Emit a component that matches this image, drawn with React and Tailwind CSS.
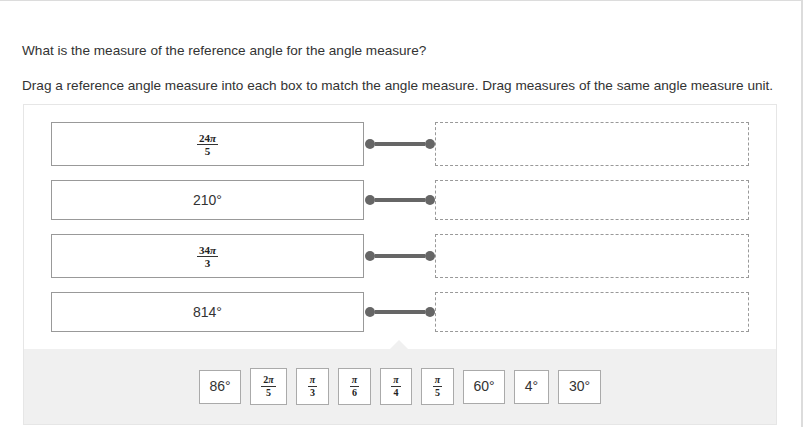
import React from "react";

const Num = ({ s }) => {
  const parts = s.split("π");
  return (
    <>
      {parts[0]}
      {s.includes("π") && <span className="italic">π</span>}
      {parts[1]}
    </>
  );
};

const Frac = ({ n, d, big }) => (
  <span
    className={
      "inline-flex flex-col items-center font-['Liberation_Serif','Times_New_Roman',serif] font-bold text-[#222] " +
      (big ? "text-[11px]" : "text-[10px]")
    }
  >
    <span className="px-[2px] leading-[10px]">
      <Num s={n} />
    </span>
    <span className="self-stretch h-0 border-t border-[#333] my-px"></span>
    <span className="leading-[10px]">{d}</span>
  </span>
);

const rows = [
  { frac: ["24π", "5"], h: "h-[44px]" },
  { text: "210°", h: "h-[40px]" },
  { frac: ["34π", "3"], h: "h-[44px]" },
  { text: "814°", h: "h-[40px]" },
];

const tiles = [
  { text: "86°", w: "w-[42px]" },
  { frac: ["2π", "5"], w: "w-[37px]" },
  { frac: ["π", "3"], w: "w-[33px]" },
  { frac: ["π", "6"], w: "w-[33px]" },
  { frac: ["π", "4"], w: "w-[32px]" },
  { frac: ["π", "5"], w: "w-[33px]" },
  { text: "60°", w: "w-[42px]" },
  { text: "4°", w: "w-[35px]" },
  { text: "30°", w: "w-[43px]" },
];

export default function App() {
  return (
    <div className="w-[805px] h-[427px] bg-white overflow-hidden font-['Liberation_Sans',Arial,sans-serif]">
      <div className="w-[803px] h-[427px] border-t border-r-2 border-[#dcdcdc] pl-[22px] pt-[42px]">
        <p className="text-[13.6px] leading-[16px] text-[#333]">
          What is the measure of the reference angle for the angle measure?
        </p>
        <p className="mt-[19px] text-[13.6px] leading-[16px] text-[#333]">
          Drag a reference angle measure into each box to match the angle measure. Drag measures of the same angle measure unit.
        </p>
        <div className="mt-[10px] ml-px w-[754px] border border-[#e6e6e6] flex flex-col">
          <div className="pt-[17px] px-[27px] flex flex-col gap-[14px]">
            {rows.map((r, i) => (
              <div key={i} className={"flex items-center " + r.h}>
                <div className="w-[313px] h-full border border-[#999] bg-white flex items-center justify-center text-[14px] text-[#333]">
                  {r.frac ? <Frac n={r.frac[0]} d={r.frac[1]} big /> : r.text}
                </div>
                <div className="w-[71px] flex items-center pl-px">
                  <span className="w-[10px] h-[10px] rounded-full bg-[#666] shrink-0"></span>
                  <span className="flex-1 h-[4px] bg-[#666]"></span>
                  <span className="w-[10px] h-[10px] rounded-full bg-[#666] shrink-0"></span>
                </div>
                <div className="w-[314px] h-full border border-dashed border-[#999] bg-white"></div>
              </div>
            ))}
          </div>
          <div className="relative mt-[17px] h-[75px] bg-[#f0f0f0] flex items-center justify-center gap-[9px]">
            <span className="absolute top-[-9px] left-[366px] w-0 h-0 border-l-[9px] border-r-[9px] border-b-[9px] border-l-transparent border-r-transparent border-b-[#f0f0f0]"></span>
            {tiles.map((t, i) => (
              <div
                key={i}
                className={
                  "bg-white border border-[#aaa] flex items-center justify-center text-[14px] text-[#333] " +
                  t.w +
                  " " +
                  (t.frac ? "h-[37px]" : "h-[34px]")
                }
              >
                {t.frac ? <Frac n={t.frac[0]} d={t.frac[1]} /> : t.text}
              </div>
            ))}
          </div>
        </div>
      </div>
    </div>
  );
}
